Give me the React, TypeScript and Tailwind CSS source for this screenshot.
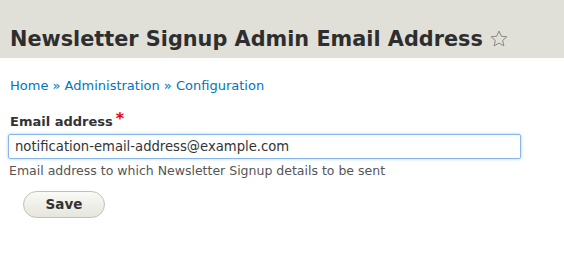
export default function App() {
  return (
    <div className="min-h-[272px] bg-white" style={{ fontFamily: '"DejaVu Sans", sans-serif' }}>
      <div className="h-[58px] bg-[#e0e0d8] px-[10px] pt-[24px]">
        <h1 className="flex items-center text-[20.8px] font-bold leading-[30px] text-[#2e2e2e]">
          Newsletter Signup Admin Email Address
          <svg viewBox="0 0 24 24" className="ml-[6px] h-[20px] w-[20px]" fill="none" stroke="#8a8a80" strokeWidth="1.2">
            <path d="M12 2.5l2.8 6.2 6.7.6-5.1 4.4 1.5 6.6L12 16.9l-5.9 3.4 1.5-6.6-5.1-4.4 6.7-.6z" />
          </svg>
        </h1>
      </div>
      <div className="px-[10px]">
        <div className="mt-[18px] text-[13px] text-[#0074bd]">
          Home » Administration » Configuration
        </div>
        <div className="mt-[16px] flex items-start text-[13px] font-bold text-[#333]">
          Email address<span className="ml-[3px] text-[16px] leading-[14px] text-[#e00]">*</span>
        </div>
        <input
          className="mt-[3px] -ml-[2px] h-[25px] w-[513px] rounded-[2px] border border-[#85b8e8] px-[6px] text-[13.2px] text-[#333] shadow-[0_0_3px_rgba(80,150,230,0.5)] outline-none"
          defaultValue="notification-email-address@example.com"
        />
        <div className="mt-[3px] -ml-[1px] text-[12.5px] text-[#555]">
          Email address to which Newsletter Signup details to be sent
        </div>
        <button className="ml-[13px] mt-[10px] h-[27px] w-[82px] rounded-full border border-[#c0c0b8] bg-gradient-to-b from-[#fafaf6] to-[#e6e6de] text-[13.5px] font-bold text-[#333]">
          Save
        </button>
      </div>
    </div>
  );
}
